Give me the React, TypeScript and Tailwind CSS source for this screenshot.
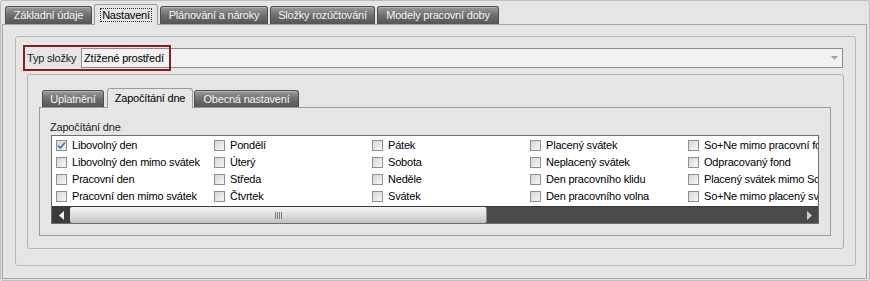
import { Fragment } from "react";

type TabProps = {
  label: string;
  className: string;
  active?: boolean;
  focus?: boolean;
  small?: boolean;
};

function Tab({ label, className, active, focus, small }: TabProps) {
  if (active) {
    return (
      <div
        className={`${className} relative z-10 -mb-px flex items-center justify-center rounded-t-[3px] border border-b-0 border-[#9a9a9a] bg-[#e6e6e6] text-black ${
          small ? "h-[20px]" : "h-[21px]"
        }`}
      >
        {focus ? (
          <span className="border border-dotted border-[#333] px-[1px] leading-[12px]">{label}</span>
        ) : (
          label
        )}
      </div>
    );
  }
  return (
    <div
      className={`${className} flex items-center justify-center rounded-t-[3px] border border-b-0 border-[#4e4e4e] bg-gradient-to-b from-[#9b9b9b] via-[#6e6e6e] to-[#565656] text-[#f4f4f4] shadow-[inset_0_1px_0_#b5b5b5] ${
        small ? "h-[17px]" : "h-[18px]"
      }`}
    >
      {label}
    </div>
  );
}

function Checkbox({ checked }: { checked?: boolean }) {
  return (
    <span className="relative flex h-[11px] w-[11px] shrink-0 items-center justify-center border border-[#8e8f8f] bg-gradient-to-br from-[#d6d6d6] to-[#f7f7f7]">
      {checked && (
        <svg width="9" height="9" viewBox="0 0 9 9" className="absolute">
          <path d="M1 4.5 L3.4 7 L8 1.5" fill="none" stroke="#3f74b8" strokeWidth="1.7" />
        </svg>
      )}
    </span>
  );
}

const columns: string[][] = [
  ["Libovolný den", "Libovolný den mimo svátek", "Pracovní den", "Pracovní den mimo svátek"],
  ["Pondělí", "Úterý", "Středa", "Čtvrtek"],
  ["Pátek", "Sobota", "Neděle", "Svátek"],
  ["Placený svátek", "Neplacený svátek", "Den pracovního klidu", "Den pracovního volna"],
  ["So+Ne mimo pracovní fond", "Odpracovaný fond", "Placený svátek mimo So+Ne", "So+Ne mimo placený svátek"],
];

export default function App() {
  return (
    <div className="h-[281px] w-[870px] overflow-hidden bg-[#e5e5e5] font-['Liberation_Sans',Arial,sans-serif] text-[11px] leading-[13px] tracking-[-0.2px] text-black">
      <div className="h-[281px] w-[870px] rounded-[3px] border border-[#bdbdbd]">
        {/* top tabs */}
        <div className="flex h-[23px] items-end gap-[2px] pl-[4px]">
          <Tab label="Základní údaje" className="w-[87px]" />
          <Tab label="Nastavení" className="w-[64px]" active focus />
          <Tab label="Plánování a nároky" className="w-[108px]" />
          <Tab label="Složky rozúčtování" className="w-[105px]" />
          <Tab label="Modely pracovní doby" className="w-[122px]" />
        </div>

        {/* tab panel */}
        <div className="ml-px h-[255px] w-[865px] border border-[#a3a3a3] pl-[12px] pt-[11px]">
          <div className="h-[230px] w-[841px] rounded-[3px] border border-[#bababa]">
            {/* Typ složky */}
            <div className="relative ml-[11px] mt-[11px] flex h-[20px] items-center">
              <span className="w-[54px] text-[#222]">Typ složky</span>
              <div className="flex h-[20px] w-[762px] items-center justify-between border border-[#8c8c8c] bg-[#f2f2f2] pl-[2px] pr-[4px]">
                <span>Ztížené prostředí</span>
                <svg width="7" height="4" viewBox="0 0 7 4">
                  <path d="M0 0 H7 L3.5 4 Z" fill="#a0a0a0" />
                </svg>
              </div>
              <div className="absolute left-[-4px] top-[-3px] h-[26px] w-[148px] border-2 border-[#8b1d1d]" />
            </div>

            {/* group box */}
            <div className="ml-[11px] mt-[6px] h-[175px] w-[817px] rounded-[3px] border border-[#b3b3b3]">
              <div className="flex h-[32px] items-end pl-[14px]">
                <Tab label="Uplatnění" className="w-[62px]" small />
                <Tab label="Započítání dne" className="ml-[3px] w-[86px]" active small />
                <Tab label="Obecná nastavení" className="ml-px w-[105px]" small />
              </div>

              <div className="ml-[11px] h-[129px] w-[792px] border border-[#9c9c9c] pt-[13px]">
                <div className="pl-[10px] text-[#222]">Započítání dne</div>
                <div className="ml-[11px] mt-px h-[89px] w-[768px] overflow-hidden border border-[#6e6e6e] bg-white">
                  <div className="flex h-[70px] pl-[4px] pt-px">
                    {columns.map((col, ci) => (
                      <div key={ci} className="w-[158px] shrink-0">
                        {col.map((item, ri) => (
                          <div key={item} className="flex h-[17px] items-center gap-[5px] whitespace-nowrap">
                            <Checkbox checked={ci === 0 && ri === 0} />
                            <span>{item}</span>
                          </div>
                        ))}
                      </div>
                    ))}
                  </div>

                  {/* horizontal scrollbar */}
                  <div className="flex h-[17px] border-t border-[#3a3a3a] bg-[#4a4a4a]">
                    <div className="flex w-[18px] items-center justify-center bg-[#3b3b3b]">
                      <svg width="5" height="9" viewBox="0 0 5 9">
                        <path d="M5 0 V9 L0 4.5 Z" fill="#f0f0f0" />
                      </svg>
                    </div>
                    <div className="flex w-[417px] items-center justify-center gap-[1px] rounded-[2px] border-r border-[#8a8a8a] bg-gradient-to-b from-[#f2f2f2] via-[#dedede] to-[#c2c2c2]">
                      {[0, 1, 2, 3].map((i) => (
                        <Fragment key={i}>
                          <span className="h-[7px] w-px bg-[#7a7a7a]" />
                        </Fragment>
                      ))}
                    </div>
                    <div className="flex flex-1 items-center justify-end pr-[6px]">
                      <svg width="5" height="9" viewBox="0 0 5 9">
                        <path d="M0 0 V9 L5 4.5 Z" fill="#d0d0d0" />
                      </svg>
                    </div>
                  </div>
                </div>
              </div>
            </div>
          </div>
        </div>
      </div>
    </div>
  );
}
